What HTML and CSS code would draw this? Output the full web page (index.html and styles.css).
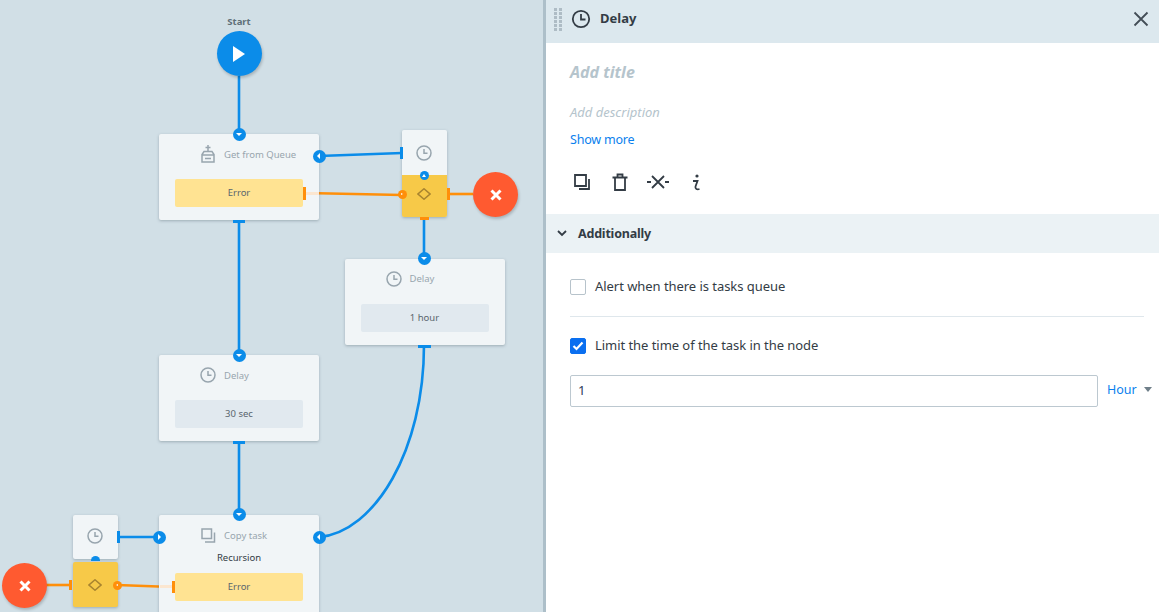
FILE: index.html
```html
<!DOCTYPE html>
<html lang="en">
<head>
  <meta charset="UTF-8" />
  <title>Delay</title>
  <link rel="stylesheet" href="styles.css">
</head>
<body>
  <div class="app">
    <div class="canvas">
      <svg class="wires" width="543" height="612" fill="none" stroke-width="2.6">
        <g stroke="#0b8ce9">
          <path d="M239 76V134" />
          <path d="M239 220V355" />
          <path d="M239 441V515" />
          <path d="M319 156L402 153" />
          <path d="M424 217V259" />
          <path d="M424 345C424 450 375 532 319 537" />
          <path d="M118 537H159" />
        </g>
        <g stroke="#ff8f0a">
          <path d="M306 193L402 195" />
          <path d="M448 194H473" />
          <path d="M46 585H72" />
          <path d="M117 585L172 587" />
        </g>
      </svg>

      <div class="start-label">Start</div>
      <div class="circle circle-start">
        <svg width="12" height="16" viewBox="0 0 12 16"><path d="M0 0L12 8L0 16Z" fill="#fff" /></svg>
      </div>

      <div class="card card-queue">
        <div class="card-head">
          <svg class="ic" width="16" height="20" viewBox="0 0 16 20"><path d="M8 7V1M5.500 3.500h5M4 7.500h8l2 3v7.500H2v-7.500zM2 11h12M5 14.500h6" /></svg>
          <span>Get from Queue</span>
        </div>
        <div class="value value-error">Error</div>
      </div>

      <div class="card card-delay-right">
        <div class="card-head">
          <svg class="ic" width="16" height="16" viewBox="0 0 16 16"><circle cx="8" cy="8" r="7" /><path d="M8 4v4.300h3.500" /></svg>
          <span>Delay</span>
        </div>
        <div class="value">1 hour</div>
      </div>

      <div class="card card-delay-mid">
        <div class="card-head">
          <svg class="ic" width="16" height="16" viewBox="0 0 16 16"><circle cx="8" cy="8" r="7" /><path d="M8 4v4.300h3.500" /></svg>
          <span>Delay</span>
        </div>
        <div class="value">30 sec</div>
      </div>

      <div class="card card-copy">
        <div class="card-head">
          <svg class="ic" width="16" height="15" viewBox="0 0 16 15"><path d="M2 1h9.500v9.500H2zM14.500 4.500V14H5" /></svg>
          <span>Copy task</span>
        </div>
        <div class="card-name">Recursion</div>
        <div class="value value-error">Error</div>
      </div>

      <div class="timer timer-top">
        <div class="timer-clock">
          <svg class="ic" width="16" height="16" viewBox="0 0 16 16"><circle cx="8" cy="8" r="7" /><path d="M8 4v4.300h3.500" /></svg>
        </div>
        <div class="timer-gate">
          <svg class="diamond" width="14" height="12" viewBox="0 0 14 12"><path d="M7 .8L13 6 7 11.200 1 6z" /></svg>
        </div>
      </div>

      <div class="timer timer-bottom">
        <div class="timer-clock">
          <svg class="ic" width="16" height="16" viewBox="0 0 16 16"><circle cx="8" cy="8" r="7" /><path d="M8 4v4.300h3.500" /></svg>
        </div>
        <div class="timer-gate">
          <svg class="diamond" width="14" height="12" viewBox="0 0 14 12"><path d="M7 .8L13 6 7 11.200 1 6z" /></svg>
        </div>
      </div>

      <div class="circle circle-stop stop-top">
        <svg width="12" height="12" viewBox="0 0 12 12"><path d="M1.500 1.500l9 9M10.500 1.500l-9 9" stroke="#fff" stroke-width="3" /></svg>
      </div>
      <div class="circle circle-stop stop-bottom">
        <svg width="12" height="12" viewBox="0 0 12 12"><path d="M1.500 1.500l9 9M10.500 1.500l-9 9" stroke="#fff" stroke-width="3" /></svg>
      </div>

      <!-- wire seen through the card -->
      <span class="fade fade-queue"></span>
      <span class="fade fade-copy"></span>

      <!-- ports -->
      <span class="port down port-queue-in"></span>
      <span class="port left port-queue-timer"></span>
      <span class="port down port-right-in"></span>
      <span class="port down port-mid-in"></span>
      <span class="port down port-copy-in"></span>
      <span class="port left port-copy-curve"></span>
      <span class="port right port-copy-timer"></span>
      <span class="port small up port-top-link"></span>
      <span class="port small orange right port-top-gate"></span>
      <span class="port small orange left port-bottom-gate"></span>
      <span class="port small half port-bottom-link"></span>

      <!-- handles -->
      <span class="handle h-queue-out"></span>
      <span class="handle h-right-out"></span>
      <span class="handle h-mid-out"></span>
      <span class="handle h-top-clock"></span>
      <span class="handle h-bottom-clock"></span>
      <span class="handle orange h-queue-error"></span>
      <span class="handle orange h-top-stop"></span>
      <span class="handle orange h-top-down"></span>
      <span class="handle orange h-bottom-stop"></span>
      <span class="handle orange h-copy-error"></span>
    </div>

    <div class="splitter"></div>

    <div class="panel">
      <div class="panel-header">
        <div class="grip">
          <i></i><i></i><i></i><i></i><i></i><i></i><i></i><i></i><i></i><i></i><i></i><i></i>
        </div>
        <svg class="panel-ic" width="20" height="20" viewBox="0 0 20 20"><circle cx="10" cy="10" r="8.200" /><path d="M10 5v5.500h4.500" /></svg>
        <span class="panel-title">Delay</span>
        <svg class="close" width="16" height="16" viewBox="0 0 16 16"><path d="M1.500 1.500l13 13M14.500 1.500l-13 13" /></svg>
      </div>

      <div class="panel-top">
        <div class="add-title">Add title</div>
        <div class="add-desc">Add description</div>
        <a class="show-more">Show more</a>
        <div class="actions">
          <svg width="16" height="16" viewBox="0 0 16 16"><path d="M1 1h11v11H1zM15 5v10H5" /></svg>
          <svg width="16" height="18" viewBox="0 0 16 18"><path d="M3 5v12h10V5M.5 4.500h15M5.500 4V1.500h5V4" /></svg>
          <svg width="22" height="14" viewBox="0 0 22 14"><path d="M5 1l12 12M17 1L5 13M0 7h4M18 7h4" /></svg>
          <svg width="9" height="17" viewBox="0 0 9 17"><path d="M1 7h4.500L3.500 12.500c-.6 2.300 1.500 3.300 4 2.500" /><circle class="dot" cx="5" cy="2" r="1.600" /></svg>
        </div>
      </div>

      <div class="section-head">
        <svg width="10" height="7" viewBox="0 0 10 7"><path d="M1 1l4 4 4-4" /></svg>
        <span>Additionally</span>
      </div>

      <div class="section-body">
        <label class="check-row">
          <span class="check"></span>
          <span>Alert when there is tasks queue</span>
        </label>
        <div class="divider"></div>
        <label class="check-row">
          <span class="check checked">
            <svg width="12" height="10" viewBox="0 0 12 10"><path d="M1.500 5l3 3 6-6.500" /></svg>
          </span>
          <span>Limit the time of the task in the node</span>
        </label>
        <div class="limit-row">
          <div class="limit-input">1</div>
          <div class="unit">Hour<i class="caret"></i></div>
        </div>
      </div>
    </div>
  </div>
</body>
</html>
```

FILE: styles.css
```css
html, body {
  margin: 0;
  height: 100%;
  overflow: hidden;
}
body {
  font-family: "Noto Sans", Arial, sans-serif;
  color: #333c45;
}
.app {
  display: flex;
  height: 612px;
}

/* left side, the process diagram */
.canvas {
  position: relative;
  width: 543px;
  flex: none;
  background-color: #d1dfe6;
  overflow: hidden;
  font-size: 9.5px;
}
.wires {
  position: absolute;
  left: 0;
  top: 0;
}
.start-label {
  position: absolute;
  left: 209px;
  top: 15px;
  width: 60px;
  text-align: center;
  font-weight: bold;
  color: #5f6f78;
}
.circle {
  position: absolute;
  display: flex;
  align-items: center;
  justify-content: center;
  width: 45px;
  height: 45px;
  border-radius: 50%;
  box-shadow: 1px 2px 3px rgba(0,0,0,0.2);
}
.circle-start {
  left: 216.500px;
  top: 31px;
  background-color: #0b8ce9;
}
.circle-stop {
  background-color: #ff5a30;
}
.stop-top {
  left: 473px;
  top: 172px;
}
.stop-bottom {
  left: 2px;
  top: 563px;
}
.card {
  position: absolute;
  box-sizing: border-box;
  width: 160px;
  height: 86px;
  padding: 0 16px;
  background-color: #f1f5f7;
  border-radius: 2px;
  box-shadow: 0 1px 3px rgba(60,80,90,0.35);
  display: flex;
  flex-direction: column;
}
.card-queue { left: 159px; top: 134px; }
.card-delay-right { left: 344.500px; top: 258.500px; }
.card-delay-mid { left: 159px; top: 355px; }
.card-copy { left: 159px; top: 515px; height: 110px; }
.card-head {
  height: 40px;
  margin-bottom: 5px;
  margin-left: 25px;
  display: flex;
  align-items: center;
  gap: 8px;
  color: #98a5ae;
  flex: none;
}
.card-copy .card-head {
  margin-bottom: -4px;
}
.card-name {
  text-align: center;
  color: #333c45;
  line-height: 14px;
  margin-bottom: 8px;
}
.value {
  height: 28px;
  line-height: 27px;
  text-align: center;
  background-color: #e1e9ef;
  border-radius: 2px;
  color: #5a656e;
  flex: none;
}
.value-error {
  background-color: #ffe392;
}
.ic {
  fill: none;
  stroke: #98a5ae;
  stroke-width: 1.500;
  flex: none;
}
.timer {
  position: absolute;
  width: 45px;
  border-radius: 2px;
}
.timer-top { left: 402px; top: 130px; box-shadow: 0 1px 3px rgba(60,80,90,0.35); }
.timer-bottom { left: 72.500px; top: 515px; }
.timer-clock {
  height: 45px;
  display: flex;
  align-items: center;
  justify-content: center;
  background-color: #f1f5f7;
  border-radius: 2px 2px 0 0;
}
.timer-clock .ic {
  margin-right: 1px;
}
.timer-gate {
  height: 42px;
  box-sizing: border-box;
  padding-bottom: 4px;
  padding-right: 1px;
  display: flex;
  align-items: center;
  justify-content: center;
  background-color: #f7c948;
  border-radius: 0 0 2px 2px;
}
.timer-bottom .timer-clock {
  height: 44px;
  box-sizing: border-box;
  padding-bottom: 2px;
  margin-bottom: 3px;
  border-radius: 2px;
  box-shadow: 0 1px 3px rgba(60,80,90,0.35);
}
.timer-bottom .timer-gate {
  height: 45px;
  padding-bottom: 0;
  border-radius: 2px;
  box-shadow: 0 1px 3px rgba(60,80,90,0.35);
}
.diamond {
  fill: none;
  stroke: #a8842f;
  stroke-width: 1.500;
}
.fade {
  position: absolute;
  height: 3px;
  background-color: #fbe6d0;
}
.fade-queue { left: 306px; top: 192px; width: 13px; }
.fade-copy { left: 160px; top: 585px; width: 12px; }

.port {
  position: absolute;
  width: 13px;
  height: 13px;
  margin: -6.500px 0 0 -6.500px;
  border-radius: 50%;
  background-color: #0b8ce9;
}
.port.small {
  width: 9px;
  height: 9px;
  margin: -4.500px 0 0 -4.500px;
}
.port.orange {
  background-color: #ff8f0a;
}
.port.half {
  height: 5px;
  border-radius: 5px 5px 0 0;
  margin-top: -4px;
}
.port::after {
  content: "";
  position: absolute;
  left: 50%;
  top: 50%;
  width: 0;
  height: 0;
  border: 3px solid transparent;
}
.port.half::after {
  display: none;
}
.port.down::after {
  margin: -1.500px 0 0 -3px;
  border-top-color: #fff;
  border-top-width: 3.500px;
  border-bottom-width: 0;
}
.port.up::after {
  margin: -1.500px 0 0 -2px;
  border-width: 0 2px 3px;
  border-bottom-color: #fff;
}
.port.left::after {
  margin: -3px 0 0 -2.500px;
  border-right-color: #fff;
  border-right-width: 3.500px;
  border-left-width: 0;
}
.port.right::after {
  margin: -3px 0 0 -1px;
  border-left-color: #fff;
  border-left-width: 3.500px;
  border-right-width: 0;
}
.port.small.orange::after {
  margin: -1.500px 0 0 -1px;
  border-width: 1.500px;
  border-left-width: 2px;
  border-right-width: 0;
  border-left-color: #fff;
}
.port.small.orange.left::after {
  border-width: 1.500px 2px 1.500px 0;
  border-left-color: transparent;
  border-right-color: #fff;
}
.port-queue-in { left: 239px; top: 134px; }
.port-queue-timer { left: 319px; top: 156px; }
.port-right-in { left: 424px; top: 258px; }
.port-mid-in { left: 239px; top: 355px; }
.port-copy-in { left: 239px; top: 514px; }
.port-copy-curve { left: 319px; top: 537px; }
.port-copy-timer { left: 159px; top: 537px; }
.port-top-link { left: 424px; top: 175px; }
.port-top-gate { left: 402px; top: 194px; }
.port-bottom-gate { left: 117px; top: 585px; }
.port-bottom-link { left: 95px; top: 560px; }

.handle {
  position: absolute;
  background-color: #0b8ce9;
}
.handle.orange {
  background-color: #ff8f0a;
}
.h-queue-out { left: 233px; top: 220px; width: 12px; height: 3px; }
.h-right-out { left: 418px; top: 345px; width: 13px; height: 3px; }
.h-mid-out { left: 233px; top: 441px; width: 12px; height: 3px; }
.h-top-clock { left: 400px; top: 147px; width: 3px; height: 12px; }
.h-bottom-clock { left: 117px; top: 531px; width: 3px; height: 12px; }
.h-queue-error { left: 303px; top: 187px; width: 3px; height: 13px; }
.h-top-stop { left: 447px; top: 188px; width: 3px; height: 12px; }
.h-top-down { left: 420px; top: 217px; width: 9px; height: 3px; }
.h-bottom-stop { left: 69px; top: 580px; width: 3px; height: 10px; }
.h-copy-error { left: 172px; top: 581px; width: 3px; height: 12px; }

.splitter {
  width: 3px;
  flex: none;
  background-color: #adbfc9;
}

/* right side, node settings */
.panel {
  flex: 1;
  background-color: #fff;
  font-size: 13px;
}
.panel-header {
  display: flex;
  align-items: center;
  height: 43px;
  padding: 0 10px 5px 8px;
  box-sizing: border-box;
  background-color: #dce8ee;
}
.grip {
  display: grid;
  grid-template-columns: 3px 3px;
  grid-auto-rows: 3px;
  gap: 1px 2px;
  width: 8px;
  margin-right: 9px;
}
.grip i {
  background-color: #aebcc5;
}
.panel-ic {
  fill: none;
  stroke: #333c45;
  stroke-width: 1.800;
}
.panel-title {
  margin-left: 9px;
  margin-top: -2px;
  font-weight: bold;
  font-size: 13px;
}
.close {
  margin-left: auto;
  fill: none;
  stroke: #434d56;
  stroke-width: 1.800;
}
.panel-top {
  height: 171px;
  box-sizing: border-box;
  padding: 18px 24px 0;
}
.add-title {
  font-style: italic;
  font-weight: bold;
  font-size: 16px;
  line-height: 22px;
  color: #b5c4cc;
}
.add-desc {
  margin-top: 20px;
  font-style: italic;
  font-size: 13px;
  line-height: 18px;
  color: #b5c4cc;
}
.show-more {
  display: block;
  margin-top: 10px;
  font-size: 12.500px;
  letter-spacing: -0.2px;
  line-height: 18px;
  color: #0a7fee;
}
.actions {
  display: grid;
  grid-template-columns: repeat(4, 38px);
  align-items: center;
  justify-items: center;
  height: 18px;
  margin-top: 24px;
  margin-left: -7px;
}
.actions svg {
  fill: none;
  stroke: #333c45;
  stroke-width: 1.800;
}
.actions .dot {
  fill: #333c45;
  stroke: none;
}
.section-head {
  display: flex;
  align-items: center;
  gap: 11px;
  height: 39px;
  box-sizing: border-box;
  padding: 0 0 1px 11px;
  background-color: #ebf2f5;
  font-size: 12.500px;
  letter-spacing: -0.2px;
  font-weight: bold;
}
.section-head svg {
  fill: none;
  stroke: #333c45;
  stroke-width: 1.800;
}
.section-body {
  padding: 24px 15px 0 24px;
  letter-spacing: -0.05px;
}
.check-row {
  display: flex;
  align-items: center;
  gap: 9px;
  height: 18px;
}
.check {
  width: 16px;
  height: 16px;
  margin-top: 2px;
  box-sizing: border-box;
  border: 1px solid #b7c3cb;
  border-radius: 2px;
  display: flex;
  align-items: center;
  justify-content: center;
  flex: none;
}
.check.checked {
  background-color: #0a6ff0;
  border-color: #0a6ff0;
}
.check svg {
  fill: none;
  stroke: #fff;
  stroke-width: 2.200;
}
.divider {
  height: 1px;
  margin: 21px 0 19px;
  background-color: #dfe7ec;
}
.limit-row {
  display: flex;
  align-items: center;
  margin-top: 21px;
  margin-right: -8px;
}
.limit-input {
  width: 528px;
  height: 32px;
  line-height: 28px;
  padding-left: 7px;
  box-sizing: border-box;
  border: 1px solid #bcc8d0;
  border-radius: 2px;
  color: #2d3a5a;
}
.unit {
  display: flex;
  align-items: center;
  margin-left: 9px;
  margin-bottom: 3px;
  font-size: 12.500px;
  color: #0a7fee;
}
.caret {
  width: 0;
  height: 0;
  margin-left: 7px;
  border: 4px solid transparent;
  border-top: 5px solid #6f7f89;
  border-bottom: 0;
}
```
